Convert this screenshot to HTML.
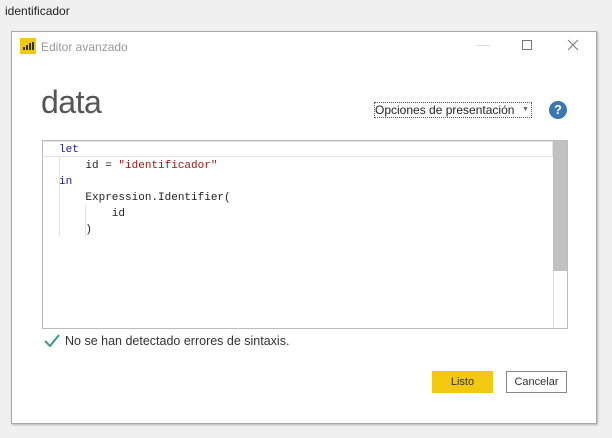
<!DOCTYPE html>
<html><head><style>
*{margin:0;padding:0;box-sizing:border-box}
body{width:612px;height:438px;background:#f0f0f0;font-family:"Liberation Sans",sans-serif;position:relative;overflow:hidden}
.abs{position:absolute}
.mono{font-family:"Liberation Mono",monospace;font-size:11px;line-height:16px;white-space:pre}
</style></head><body>
<div class="abs" style="left:5px;top:4px;font-size:12px;color:#222">identificador</div>
<div class="abs" style="left:11px;top:31px;width:586px;height:393px;background:#fff;border:1px solid #a8a8a8;box-shadow:1px 1px 2px rgba(0,0,0,.25)"></div>
<div class="abs" style="left:20px;top:38px;width:16px;height:16px;background:#f2c811"></div>
<div class="abs" style="left:23px;top:47px;width:2px;height:3px;background:#333"></div>
<div class="abs" style="left:26px;top:45px;width:2px;height:5px;background:#333"></div>
<div class="abs" style="left:29px;top:43px;width:2px;height:7px;background:#333"></div>
<div class="abs" style="left:32px;top:42px;width:2px;height:8px;background:#333"></div>
<div class="abs" style="left:41px;top:40px;font-size:12px;color:#999">Editor avanzado</div>
<div class="abs" style="left:476px;top:45px;width:14px;height:1px;background:#ddd"></div>
<div class="abs" style="left:522px;top:40px;width:10px;height:10px;border:1px solid #777"></div>
<svg class="abs" style="left:567px;top:39px" width="12" height="12"><path d="M1 1L11 11M11 1L1 11" stroke="#777" stroke-width="1"/></svg>
<div class="abs" style="left:41px;top:84px;font-size:32px;color:#555;letter-spacing:-0.5px">data</div>
<div class="abs" style="left:374px;top:102px;width:158px;height:16px;border:1px dotted #555"></div>
<div class="abs" style="left:375px;top:103px;font-size:12px;color:#222">Opciones de presentación</div>
<div class="abs" style="left:522px;top:106px;font-size:7px;color:#666">▼</div>
<div class="abs" style="left:549px;top:101px;width:18px;height:18px;border-radius:50%;background:#3b77b0;color:#fff;font-weight:bold;font-size:13px;text-align:center;line-height:18px">?</div>
<div class="abs" style="left:42px;top:140px;width:526px;height:189px;border:1px solid #bbb;background:#fff"></div>
<div class="abs" style="left:43px;top:141px;width:510px;height:16px;border:1px solid #e4e4e4;border-left:none;background:#fff"></div>
<div class="abs" style="left:553px;top:141px;width:14px;height:130px;background:#c1c1c1"></div>
<div class="abs" style="left:553px;top:271px;width:1px;height:57px;background:#ddd"></div>
<div class="abs" style="left:59px;top:157px;width:1px;height:80px;background:#e3e3e3"></div>
<div class="abs" style="left:85px;top:205px;width:1px;height:32px;background:#e3e3e3"></div>
<div class="abs mono" style="left:59px;top:142px;color:#222"><span style="color:#1a1a9a">let</span>
    id = <span style="color:#a31515">"identificador"</span>
<span style="color:#1a1a9a">in</span>
    Expression.Identifier(
        id
    )</div>
<svg class="abs" style="left:44px;top:334px" width="16" height="14"><path d="M1 7L6 12L15 1" stroke="#3a9a88" stroke-width="2" fill="none"/></svg>
<div class="abs" style="left:65px;top:334px;font-size:12.5px;color:#333">No se han detectado errores de sintaxis.</div>
<div class="abs" style="left:432px;top:371px;width:61px;height:22px;background:#f2c811;font-size:11px;color:#333;text-align:center;line-height:22px">Listo</div>
<div class="abs" style="left:506px;top:371px;width:61px;height:22px;border:1px solid #888;background:#fff;font-size:11px;color:#333;text-align:center;line-height:20px">Cancelar</div>
</body></html>
